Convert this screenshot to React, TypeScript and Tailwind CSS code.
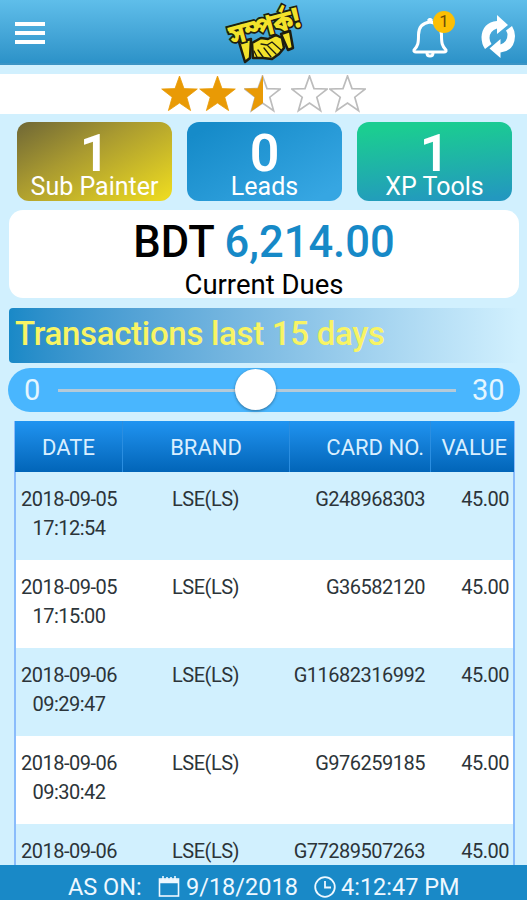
const stats = [
  { label: 'Sub Painter', value: 1, bg: 'bg-[linear-gradient(150deg,#6f6736_0%,#a99a30_40%,#ead821_95%)]' },
  { label: 'Leads', value: 0, bg: 'bg-[linear-gradient(150deg,#168bc9_10%,#36a6e2_90%)]' },
  { label: 'XP Tools', value: 1, bg: 'bg-[linear-gradient(175deg,#1bcd91_10%,#2398bf_95%)]' },
]

const rows = [
  { date: '2018-09-05', time: '17:12:54', brand: 'LSE(LS)', card: 'G248968303', value: '45.00' },
  { date: '2018-09-05', time: '17:15:00', brand: 'LSE(LS)', card: 'G36582120', value: '45.00' },
  { date: '2018-09-06', time: '09:29:47', brand: 'LSE(LS)', card: 'G11682316992', value: '45.00' },
  { date: '2018-09-06', time: '09:30:42', brand: 'LSE(LS)', card: 'G976259185', value: '45.00' },
  { date: '2018-09-06', time: '', brand: 'LSE(LS)', card: 'G77289507263', value: '45.00' },
]

const STAR = 'M18.500 1 L23 13.600 L36.300 14 L25.800 22.200 L29.600 35.600 L18.500 28 L7.400 35.600 L11.200 22.200 L0.700 14 L14 13.600 Z'

function Star({ fill }: { fill: 'full' | 'half' | 'empty' }) {
  return (
    <svg width="37" height="38" viewBox="0 0 37 38">
      {fill !== 'full' && <path d={STAR} fill="none" stroke="#bcbcbc" strokeWidth="1.700" />}
      {fill === 'full' && <path d={STAR} fill="#e99a05" stroke="#e99a05" strokeWidth="0.800" />}
      {fill === 'half' && (
        <path d="M19 0 L19 28 L7 36.500 L10.800 22.200 L0 13.600 L13.800 13.300 Z" fill="#e99a05" />
      )}
    </svg>
  )
}

function Logo() {
  return (
    <svg width="84" height="63" viewBox="0 0 84 63" overflow="visible">
      <g stroke="#1d1d10" strokeWidth="2.5" strokeLinejoin="round" fill="#f3e22b">
        <path d="M14 42 L26 39 L25 58 L20 62 Z" />
        <path d="M56 34 L65 31 L68 48 L63 50 Z" />
        <path d="M27 43 L36 38 L43 39 L51 35 L57 38 L59 48 L54 54 L47 59 L38 58 L28 58 Z" />
      </g>
      <g stroke="#1d1d10" strokeWidth="1.300" fill="none" strokeLinecap="round">
        <path d="M36 44 L42 45 L47 42 L56 50 M43 46 L51 54 M39 48 L46 57 M33 50 L38 57 M29 51 L32 57" />
      </g>
      <text
        x="7"
        y="45"
        transform="rotate(-15 7 45)"
        fontSize="28"
        fontWeight="900"
        textLength="73"
        lengthAdjust="spacingAndGlyphs"
        fill="#f3e22b"
        stroke="#1d1d10"
        strokeWidth="3.500"
        paintOrder="stroke"
        className="font-['Noto_Sans_Bengali','Noto_Sans',sans-serif]"
      >
        সম্পর্ক!
      </text>
    </svg>
  )
}

function Header() {
  return (
    <header className="flex h-[65px] shrink-0 items-start border-b-2 border-[#3b94c5] bg-linear-to-b from-[#5fbeea] to-[#2c92c8]">
      <button className="mt-[22px] ml-[15px] flex w-[30px] flex-col gap-[5px]">
        <span className="h-[4px] bg-white" />
        <span className="h-[4px] bg-white" />
        <span className="h-[4px] bg-white" />
      </button>
      <div className="ml-[180px]">
        <Logo />
      </div>
      <button className="relative mt-[18px] ml-[103px]">
        <svg width="36" height="40" viewBox="0 0 36 40" fill="none" stroke="white" strokeWidth="3" strokeLinejoin="round">
          <path d="M18 4 C9 5 6.5 10 6.5 17 C6.5 25 6 28 2 32 Q1.5 34 4 34 L32 34 Q34.500 34 34 32 C30 28 29.500 25 29.500 17 C29.500 10 27 5 18 4 Z" />
          <path d="M15 35 Q15 38 18 38 Q21 38 21 35" />
          <path d="M16 3 L18 1 L20 3" />
        </svg>
        <span className="absolute top-[-7px] left-[21px] flex size-[22px] items-center justify-center rounded-full bg-[#fcbf05] text-[17px] text-[#6b4c09]">
          1
        </span>
      </button>
      <button className="mt-[14px] ml-[33px]">
        <svg width="36" height="45" viewBox="0 0 36 45" fill="white">
          <path d="M16 1 L27 11 L16 20 L16 14.500 Q8.500 17 8.500 24 Q8.500 27 10.500 30 L4 35 Q0.500 30 0.500 23 Q1.500 8.500 16 7 Z" />
          <path d="M19.500 44 L8.500 34.500 L19.500 25 L19.500 30.500 Q26.500 28 26.500 20.500 Q26.500 19 25 16.500 L31 12 Q34 17 34 22 Q33.500 37 19.500 38.500 Z" />
        </svg>
      </button>
    </header>
  )
}

function Stats() {
  return (
    <div className="mt-2 ml-[17px] flex gap-[15px]">
      {stats.map(s => (
        <div key={s.label} className={`flex h-[79px] w-[155px] flex-col items-center rounded-xl text-white ${s.bg}`}>
          <span className="mt-[11px] text-[52px] leading-[41px] font-semibold">{s.value}</span>
          <span className="text-[25px] leading-[26px]">{s.label}</span>
        </div>
      ))}
    </div>
  )
}

function RangeSlider() {
  return (
    <div className="mt-[5px] ml-[8px] flex h-[44px] w-[512px] items-center rounded-full bg-[#49b6fe] text-[29px] text-[#e4f6ff]">
      <span className="mt-px ml-[16px] w-[34px]">0</span>
      <div className="relative h-[3px] w-[398px] bg-[#b5cad8]">
        <span className="absolute top-[-20px] left-[177px] size-[41px] rounded-full bg-white shadow-[0_1px_3px_rgba(0,0,0,0.4)]" />
      </div>
      <span className="mt-px ml-[16px]">30</span>
    </div>
  )
}

function Transactions() {
  return (
    <div className="mt-[9px] ml-[14px] w-[501px] border-x-2 border-[#8abcfb] text-[20px] tracking-[-0.025em]">
      <div className="-mx-px grid h-[51px] grid-cols-[108px_167px_141px_83px] items-stretch bg-linear-to-b from-[#2094f1] to-[#0265b8] text-[22px] leading-[53px] tracking-normal text-[#d9efff]">
        <span className="h-[51px] border-r border-[#2b8ee0] text-center">DATE</span>
        <span className="h-[51px] border-r border-[#2b8ee0] text-center">BRAND</span>
        <span className="h-[51px] border-r border-[#2b8ee0] pr-[6px] text-right">CARD NO.</span>
        <span className="h-[51px] pr-[7px] text-right">VALUE</span>
      </div>
      {rows.map(r => (
        <div
          key={r.card}
          className="grid h-[88px] grid-cols-[106px_167px_136px_84px] pt-[13px] leading-[29px] text-[#2c3439] odd:bg-white even:bg-[#d1f0fe]"
        >
          <span className="text-center">
            {r.date}
            <br />
            {r.time}
          </span>
          <span className="text-center">{r.brand}</span>
          <span className="text-right">{r.card}</span>
          <span className="text-right">{r.value}</span>
        </div>
      ))}
    </div>
  )
}

function Footer() {
  return (
    <footer className="flex h-[35px] shrink-0 items-center bg-[#1989c7] pt-[9px] text-[23.5px] leading-[26px] text-[#eef8ff]">
      <span className="ml-[68px] w-[75px]">AS ON:</span>
      <svg className="ml-[15px]" width="22" height="22" viewBox="0 0 22 22" fill="none" stroke="currentColor" strokeWidth="1.6">
        <rect x="1.500" y="3" width="19" height="17" />
        <path d="M1 4.500 H21 M1 6 H21" strokeWidth="2.500" />
        <path d="M5 0 V4 M9 1 V4 M13 1 V4 M17 0 V4" />
      </svg>
      <span className="ml-[6px] w-[112px]">9/18/2018</span>
      <svg className="ml-[16px]" width="22" height="22" viewBox="0 0 22 22" fill="none" stroke="currentColor" strokeWidth="1.800">
        <circle cx="11" cy="11" r="9.800" />
        <path d="M11 5 V11.500 H17" />
      </svg>
      <span className="ml-[5px]">4:12:47 PM</span>
    </footer>
  )
}

export default function App() {
  return (
    <div className="flex h-screen w-[527px] flex-col overflow-hidden bg-[#d1f0fe] font-[Roboto,sans-serif]">
      <Header />
      <main className="min-h-0 flex-1 overflow-hidden">
        <div className="mt-[9px] flex h-[40px] items-center bg-white pl-[161px]">
          <Star fill="full" />
          <span className="w-px" />
          <Star fill="full" />
          <span className="w-[8px]" />
          <Star fill="half" />
          <span className="w-[10px]" />
          <Star fill="empty" />
          <span className="w-px" />
          <Star fill="empty" />
        </div>
        <Stats />
        <div className="mt-[9px] ml-[9px] h-[88px] w-[510px] rounded-[14px] bg-white text-center text-black">
          <div className="pt-[9px] text-[43.5px] leading-[48px] font-medium">
            BDT <span className="text-[#1689c7]">6,214.00</span>
          </div>
          <div className="mt-[3px] text-[27.5px] leading-[30px]">Current Dues</div>
        </div>
        <div className="mt-[10px] ml-[9px] h-[55px] w-[510px] rounded-[4px] bg-linear-to-r from-[#1989c7] to-[#d1f0fe] pl-[6px] text-[33px] leading-[52px] font-medium tracking-[-0.3px] text-[#f8f464]">
          Transactions last 15 days
        </div>
        <RangeSlider />
        <Transactions />
      </main>
      <Footer />
    </div>
  )
}
